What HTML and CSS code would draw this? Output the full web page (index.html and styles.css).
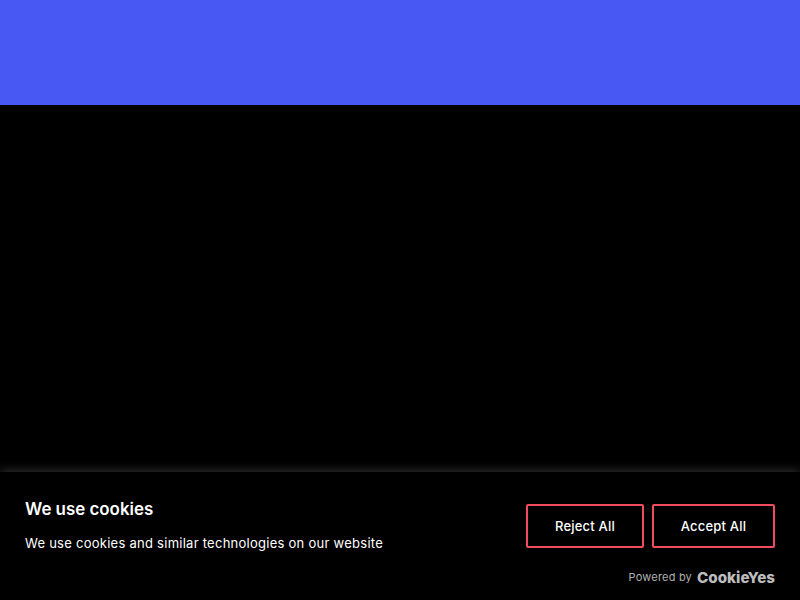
FILE: index.html
```html
<!DOCTYPE html>
<html lang="en">
<head>
<meta charset="utf-8">
<title>We use cookies</title>
<link rel="stylesheet" href="styles.css">
</head>
<body>
<header class="topbar"></header>
<main class="content"></main>
<section class="banner">
  <div class="banner-row">
    <div class="banner-text">
      <h2 class="banner-title">We use cookies</h2>
      <p class="banner-desc">We use cookies and similar technologies on our website</p>
    </div>
    <div class="banner-actions">
      <button class="btn btn-reject">Reject All</button>
      <button class="btn btn-accept">Accept All</button>
    </div>
  </div>
  <div class="powered">
    <span class="powered-label">Powered by</span>
    <span class="logo">CookieYes</span>
  </div>
</section>
</body>
</html>
```
FILE: styles.css
```css
* { box-sizing: border-box; }
html, body { margin: 0; height: 100%; }
body {
  display: flex;
  flex-direction: column;
  height: 600px;
  overflow: hidden;
  background: #000;
  font-family: "Inter", "Liberation Sans", sans-serif;
  color: #fff;
}
.topbar { height: 105px; background: #4858f2; flex: none; }
.content { flex: 1; background: #000; }
.banner {
  flex: none;
  height: 128px;
  padding: 24px 25px 0;
  background: #000;
  box-shadow: 0 -1px 10px rgba(172, 171, 171, 0.3);
  position: relative;
}
.banner-row { display: flex; justify-content: space-between; align-items: flex-start; }
.banner-text { padding-top: 2px; }
.banner-title { margin: 0 0 13px; font-size: 16.9px; line-height: 22px; font-weight: 600; }
.banner-desc { margin: 0; font-size: 13px; line-height: 20px; font-weight: 400; letter-spacing: 0.26px; }
.banner-actions { display: flex; gap: 8px; padding-top: 8px; }
.btn {
  height: 44px;
  background: transparent;
  border: 2px solid #f24a5f;
  border-radius: 2px;
  color: #fff;
  font: 500 13px/20px "Inter", "Liberation Sans", sans-serif;
  letter-spacing: 0.2px;
  padding: 0;
}
.btn-reject { width: 118px; }
.btn-accept { width: 123px; }
.powered {
  display: flex;
  justify-content: flex-end;
  align-items: center;
  gap: 5px;
  margin-top: 17px;
  height: 16px;
  color: #b0b0b0;
}
.powered-label { font-size: 11px; line-height: 14px; letter-spacing: 0.2px; margin-bottom: 2px; }
.logo { font-size: 15.2px; line-height: 16px; font-weight: 800; color: #bdbdbd; }
```
